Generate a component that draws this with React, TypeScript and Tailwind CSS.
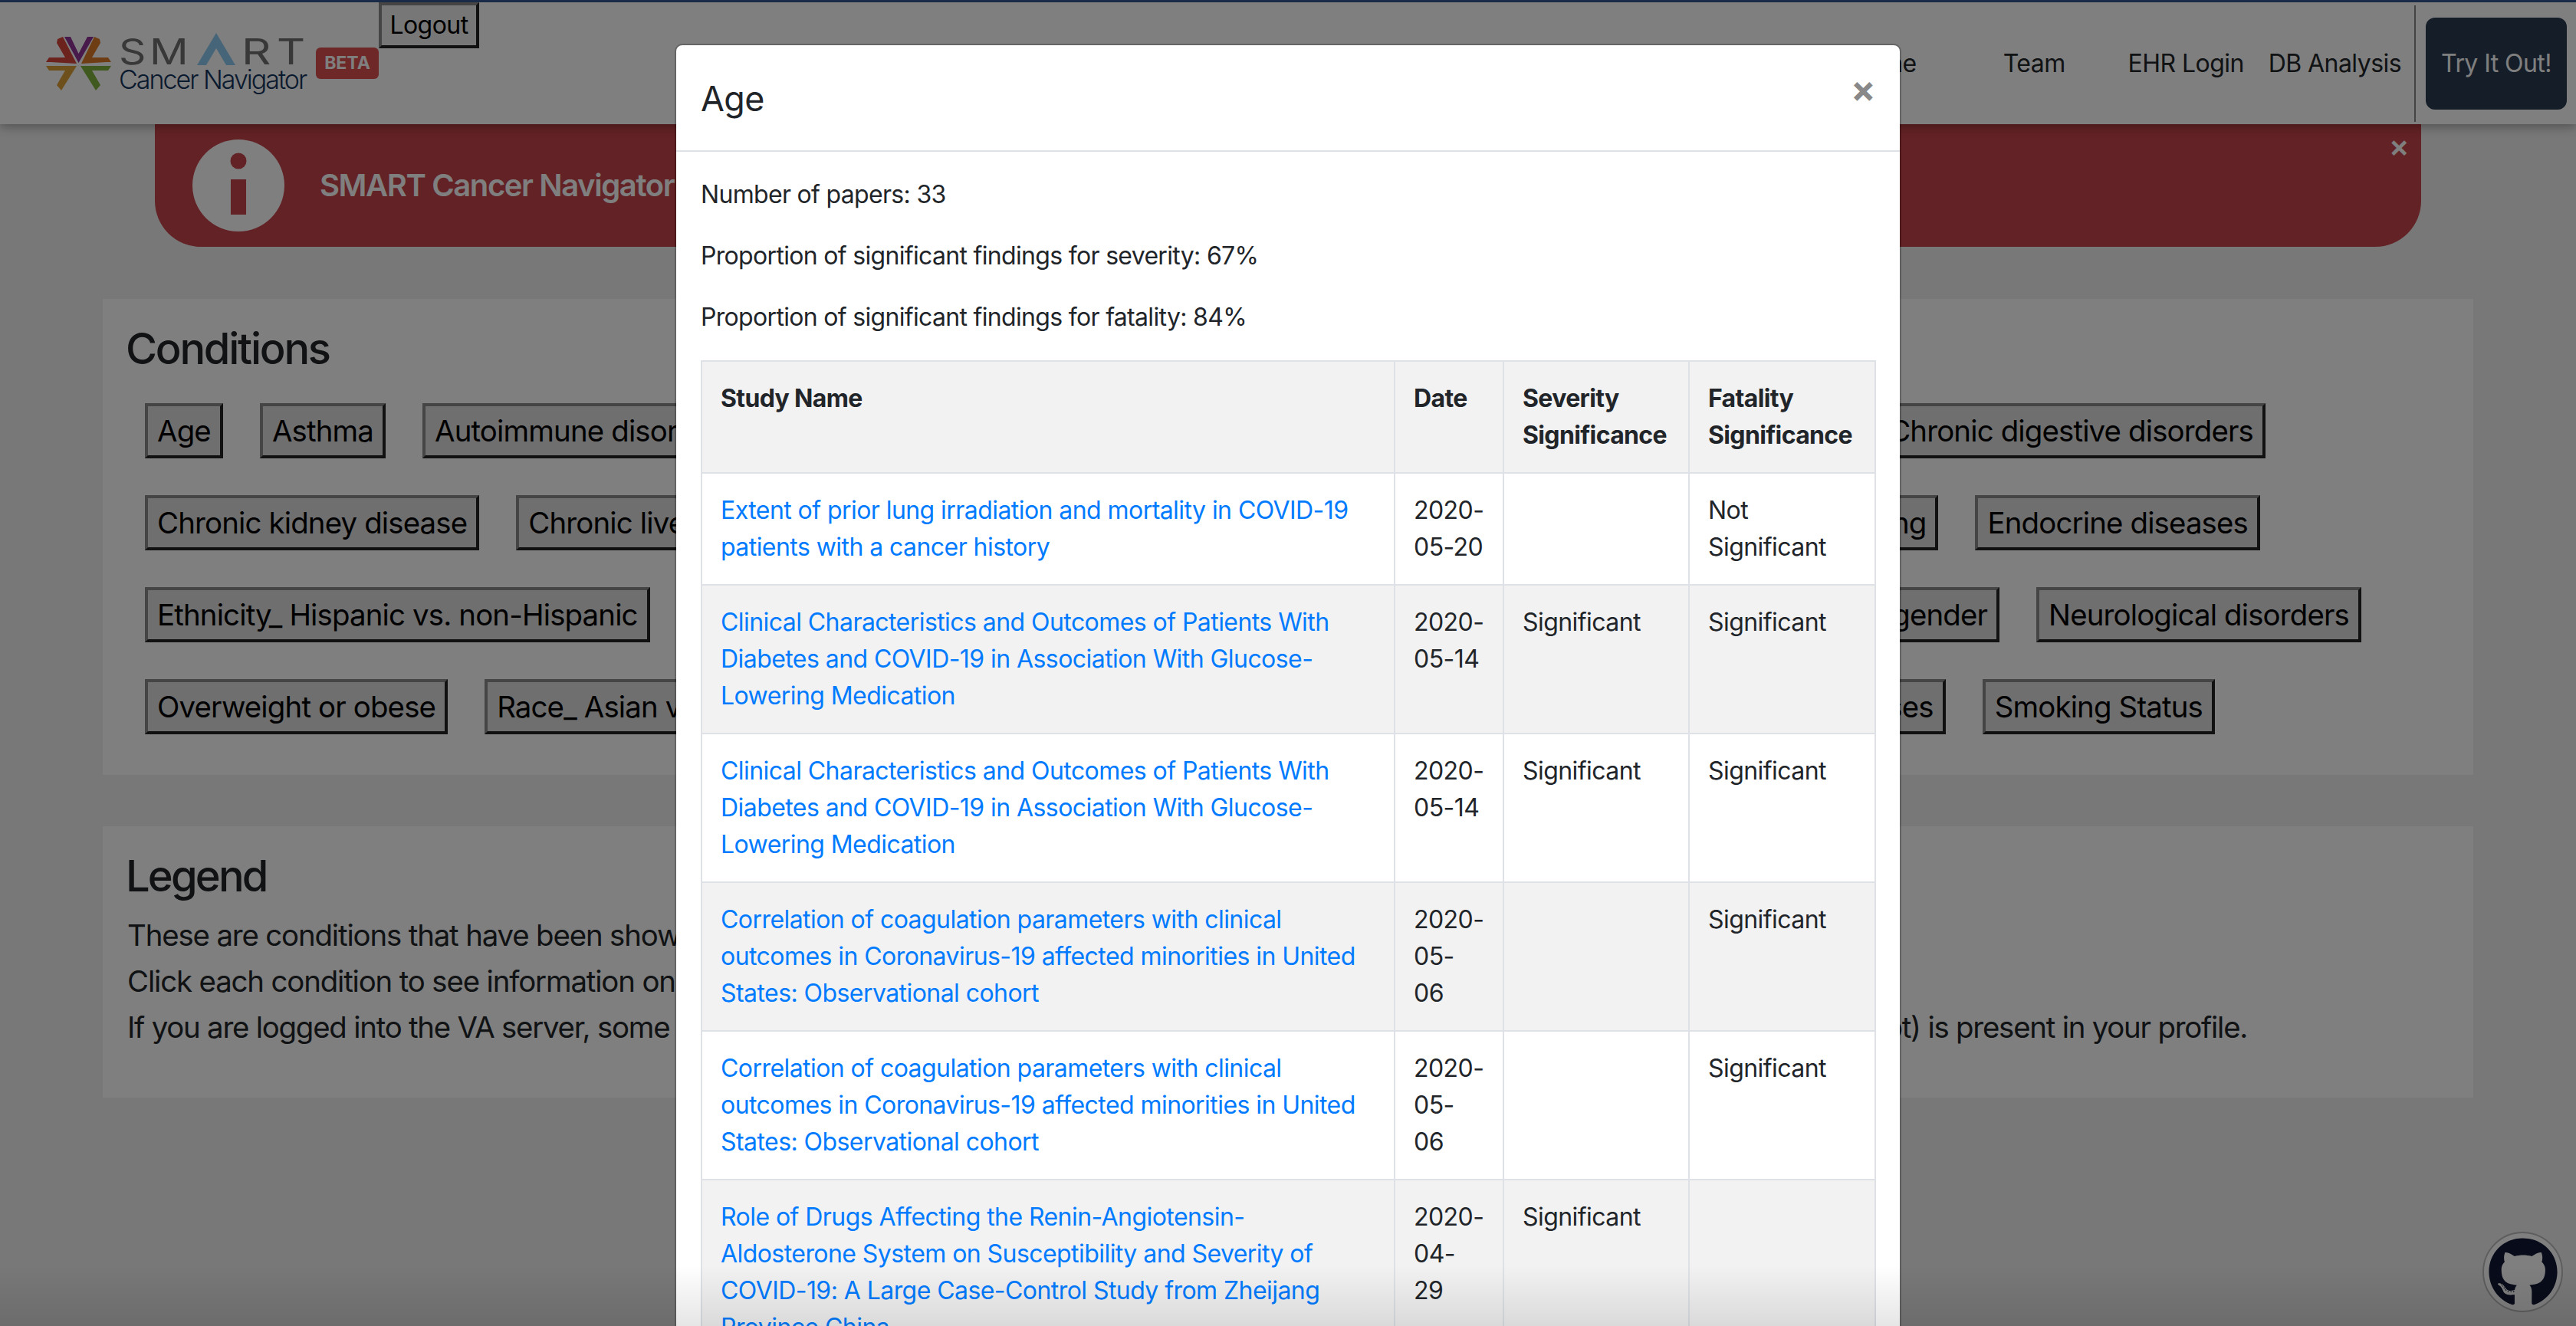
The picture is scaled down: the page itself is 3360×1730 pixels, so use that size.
import { FaGithub } from "react-icons/fa";

const font = "font-['Inter',sans-serif] tracking-[-0.56px]";

function Chip({ text, className }: { text: string; className?: string }) {
  return (
    <button
      className={`h-[72px] shrink-0 mx-[24px] px-[12px] border-[4px] border-[#8a8a8a] border-b-[#222] border-r-[#222] bg-[#dedede] text-[38.4px] leading-[56px] tracking-[-0.022em] text-black whitespace-nowrap overflow-hidden ${className ?? ""}`}
    >
      {text}
    </button>
  );
}

function Logo() {
  return (
    <svg viewBox="0 0 85 70" className="w-[85px] h-[70px] shrink-0">
      <polygon points="24,0 32,0 42.5,22 54,0 62,0 42.5,34" fill="#8e3496" />
      <polygon points="15,3 22,0 40,35 6,33 0,33 4,27 25,27 14,8" fill="#d8443a" />
      <polygon points="70,3 63,0 46,35 79,33 85,33 81,27 60,27 71,8" fill="#dd7a26" />
      <polygon points="0,38 40,38 20,70 14,63 25,44 4,44" fill="#dca03a" />
      <polygon points="45,38 85,38 81,44 60,44 71,63 65,70" fill="#7eb23c" />
    </svg>
  );
}

const rows = [
  { id: "a", name: ["Extent of prior lung irradiation and mortality in COVID-19", "patients with a cancer history"], date: ["2020-", "05-20"], sev: "", fat: ["Not", "Significant"] },
  { id: "b", name: ["Clinical Characteristics and Outcomes of Patients With", "Diabetes and COVID-19 in Association With Glucose-", "Lowering Medication"], date: ["2020-", "05-14"], sev: "Significant", fat: ["Significant"] },
  { id: "c", name: ["Clinical Characteristics and Outcomes of Patients With", "Diabetes and COVID-19 in Association With Glucose-", "Lowering Medication"], date: ["2020-", "05-14"], sev: "Significant", fat: ["Significant"] },
  { id: "d", name: ["Correlation of coagulation parameters with clinical", "outcomes in Coronavirus-19 affected minorities in United", "States: Observational cohort"], date: ["2020-", "05-", "06"], sev: "", fat: ["Significant"] },
  { id: "e", name: ["Correlation of coagulation parameters with clinical", "outcomes in Coronavirus-19 affected minorities in United", "States: Observational cohort"], date: ["2020-", "05-", "06"], sev: "", fat: ["Significant"] },
  { id: "f", name: ["Role of Drugs Affecting the Renin-Angiotensin-", "Aldosterone System on Susceptibility and Severity of", "COVID-19: A Large Case-Control Study from Zheijang", "Province China"], date: ["2020-", "04-", "29"], sev: "Significant", fat: [] },
];

export default function App() {
  return (
    <div className={`${font} relative h-[1730px] overflow-hidden bg-[#f0f0f0] text-[#212529]`}>
      {/* Header */}
      <header className="relative z-10 flex h-[162px] items-start bg-white border-t-[3px] border-[#35568f] shadow-[0_4px_12px_rgba(0,0,0,0.3)]">
        <div className="flex items-start pl-[60px] pt-[45px]">
          <Logo />
          <div className="ml-[10px] w-[244px] -mt-[5px]">
            <div className="flex h-[42px] items-end text-[46px] leading-[36px] font-normal tracking-normal text-[#707070]">
              <span className="w-[40px] origin-left scale-x-[1.2]">S</span>
              <span className="w-[62px] origin-left scale-x-[1.22]">M</span>
              <svg viewBox="0 0 50 42" className="w-[50px] h-[42px] shrink-0">
                <polygon points="25,0 50,42 38,42 25,20 12,42 0,42" fill="#8fcbf0" />
              </svg>
              <span className="ml-[8px] w-[46px] origin-left scale-x-[1.3]">R</span>
              <span className="w-[37px] origin-left scale-x-[1.25]">T</span>
            </div>
            <div className="text-[34px] leading-[38px] tracking-[-2px] font-light text-[#14345c] whitespace-nowrap">Cancer Navigator</div>
          </div>
          <span className="ml-[13px] mt-[14px] flex h-[41px] w-[82px] items-center justify-center rounded-[6px] bg-[#dc5050] text-[23px] font-bold tracking-normal text-white">BETA</span>
        </div>
        <button className="mt-0 h-[60px] w-[131px] border-[4px] border-[#8a8a8a] border-b-[#222] border-r-[#222] bg-[#efefef] text-[32px] leading-none text-black">Logout</button>
        <nav className="ml-auto flex h-full items-center text-[32px] text-[#212529]">
          <a className="mr-[113px]">Timeline</a>
          <a className="mr-[82px]">Team</a>
          <a className="mr-[32px]">EHR Login</a>
          <a className="mr-[17px]">DB Analysis</a>
          <div className="h-[152px] border-l-[2px] border-[#888] pl-[13px] flex items-center">
            <button className="mr-[12px] h-[120px] w-[184px] rounded-[12px] bg-[#2a3a50] text-[32px] text-white">Try It Out!</button>
          </div>
        </nav>
      </header>

      {/* Alert */}
      <div className="relative mx-[202px] flex h-[160px] items-center rounded-b-[60px] bg-[#c6444a] pl-[49px] text-white">
        <svg viewBox="0 0 120 120" className="w-[120px] h-[120px] shrink-0">
          <circle cx="60" cy="60" r="60" fill="#fff" />
          <circle cx="60" cy="28" r="10.5" fill="#c6444a" />
          <rect x="50" y="52" width="20" height="46" fill="#c6444a" />
        </svg>
        <span className="ml-[46px] text-[40px] font-semibold tracking-[-0.035em] whitespace-nowrap">SMART Cancer Navigator is a research tool</span>
        <span className="absolute right-[16px] top-[7px] text-[40px] leading-[44px] font-semibold">×</span>
      </div>

      {/* Conditions */}
      <section className="mx-[134px] mt-[68px] h-[621px] bg-white px-[32px] pt-[32px]">
        <h3 className="-ml-[2px] text-[56px] leading-[67px] font-medium tracking-[-0.04em] text-[#212529]">Conditions</h3>
        <div className="mt-[37px] flex flex-col gap-[48px] -ml-[1px]">
          <div className="flex">
            <Chip text="Age" />
            <Chip text="Asthma" />
            <Chip text="Autoimmune disorders" />
            <Chip text="Chronic digestive disorders" className="ml-auto mr-[239px]" />
          </div>
          <div className="flex">
            <Chip text="Chronic kidney disease" />
            <Chip text="Chronic liver disease" />
            <Chip text="Current smoking" className="ml-auto" />
            <Chip text="Endocrine diseases" className="mr-[246px]" />
          </div>
          <div className="flex">
            <Chip text="Ethnicity_ Hispanic vs. non-Hispanic" />
            <Chip text="Male gender" className="ml-auto" />
            <Chip text="Neurological disorders" className="mr-[114px]" />
          </div>
          <div className="flex">
            <Chip text="Overweight or obese" />
            <Chip text="Race_ Asian vs. White" />
            <Chip text="Respiratory diseases" className="ml-auto" />
            <Chip text="Smoking Status" className="mr-[305px]" />
          </div>
        </div>
      </section>

      {/* Legend */}
      <section className="mx-[134px] mt-[67px] h-[354px] bg-white px-[32px] pt-[32px] text-[38.4px] leading-[60px] tracking-[-0.03em]">
        <h3 className="-ml-[2px] text-[56px] leading-[67px] mb-[13px] font-medium tracking-[-0.05em]">Legend</h3>
        <p className="whitespace-nowrap">These are conditions that have been shown to affect COVID-19 outcomes.</p>
        <p className="whitespace-nowrap">Click each condition to see information on the studies.</p>
        <p className="whitespace-nowrap tracking-[-0.032em]">If you are logged into the VA server, some of the conditions will be highlighted with a different colour if that condition (or a related concept) is present in your profile.</p>
      </section>

      <a className="absolute right-[17px] top-[1607px] flex h-[105px] w-[105px] items-center justify-center rounded-full border-[2px] border-[#bbb] bg-white">
        <FaGithub className="h-[92px] w-[92px] text-[#111733]" />
      </a>

      {/* Backdrop and modal */}
      <div className="absolute inset-0 z-20 bg-black/50" />
      <div className="absolute left-[880px] top-[57px] z-30 w-[1600px] h-[1700px] rounded-[10px] border-[2px] border-black/20 bg-white bg-clip-padding text-[32px] leading-[48px]">
        <div className="flex h-[139px] items-start justify-between border-b-[2px] border-[#dee2e6] px-[32px] pt-[40px]">
          <h5 className="text-[44.8px] leading-[60px]">Age</h5>
          <span className="mt-[-19px] text-[48px] leading-[72px] font-bold text-[#888]">×</span>
        </div>
        <div className="px-[32px] pt-[32px]">
          <p className="mb-[32px] tracking-[-0.68px]">Number of papers: 33</p>
          <p className="mb-[32px] tracking-[-0.68px]">Proportion of significant findings for severity: 67%</p>
          <p className="mb-[32px] tracking-[-0.68px]">Proportion of significant findings for fatality: 84%</p>
          <table className="w-[1531px] table-fixed border-collapse">
            <colgroup>
              <col className="w-[904px]" />
              <col className="w-[142px]" />
              <col className="w-[242px]" />
              <col className="w-[243px]" />
            </colgroup>
            <thead>
              <tr className="bg-[#f2f2f2] text-left align-top tracking-[-0.02em]">
                <th className="border-[2px] border-[#dee2e6] p-[24px] font-bold">Study Name</th>
                <th className="border-[2px] border-[#dee2e6] p-[24px] font-bold">Date</th>
                <th className="border-[2px] border-[#dee2e6] p-[24px] font-bold">Severity Significance</th>
                <th className="border-[2px] border-[#dee2e6] p-[24px] font-bold">Fatality Significance</th>
              </tr>
            </thead>
            <tbody>
              {rows.map((row, index) => (
                <tr key={row.id} className={`align-top ${index % 2 === 1 ? "bg-[#f2f2f2]" : "bg-white"}`}>
                  <td className="border-[2px] border-[#dee2e6] p-[24px] text-[#007bff] whitespace-nowrap">
                    {row.name.map((line) => (
                      <div key={line}>{line}</div>
                    ))}
                  </td>
                  <td className="border-[2px] border-[#dee2e6] p-[24px] whitespace-nowrap">
                    {row.date.map((line) => (
                      <div key={line}>{line}</div>
                    ))}
                  </td>
                  <td className="border-[2px] border-[#dee2e6] p-[24px]">{row.sev}</td>
                  <td className="border-[2px] border-[#dee2e6] p-[24px]">
                    {row.fat.map((line) => (
                      <div key={line}>{line}</div>
                    ))}
                  </td>
                </tr>
              ))}
            </tbody>
          </table>
        </div>
      </div>
      <div className="absolute inset-x-0 bottom-0 z-40 h-[80px] bg-gradient-to-t from-black/10 to-transparent" />
    </div>
  );
}
